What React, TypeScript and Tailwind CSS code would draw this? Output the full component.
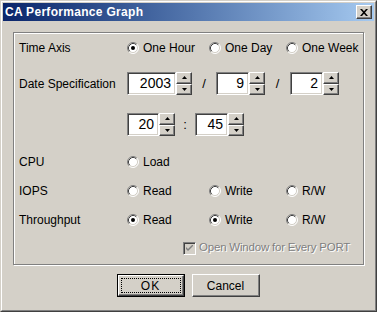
import React from "react";

const font = { fontFamily: '"Liberation Sans", Arial, sans-serif' };

function Radio({ checked, label }: { checked?: boolean; label: string }) {
  return (
    <div className="flex items-center h-[20px]">
      <svg width="12" height="12" viewBox="0 0 12 12" className="shrink-0">
        <circle cx="6" cy="6" r="5" fill="#fff" />
        <path d="M2.11 9.89 A5.5 5.5 0 0 1 9.89 2.11" fill="none" stroke="#808080" strokeWidth="1" />
        <path d="M9.89 2.11 A5.5 5.5 0 0 1 2.11 9.89" fill="none" stroke="#fff" strokeWidth="1" />
        <path d="M2.82 9.18 A4.5 4.5 0 0 1 9.18 2.82" fill="none" stroke="#404040" strokeWidth="1" />
        <path d="M9.18 2.82 A4.5 4.5 0 0 1 2.82 9.18" fill="none" stroke="#d4d0c8" strokeWidth="1" />
        {checked && <circle cx="6" cy="6" r="2" fill="#000" />}
      </svg>
      <span className="ml-[4px]">{label}</span>
    </div>
  );
}

function Arrow({ up }: { up?: boolean }) {
  return (
    <svg width="5" height="3" viewBox="0 0 5 3">
      <path d={up ? "M2.5 0 L5 3 L0 3 Z" : "M0 0 L5 0 L2.5 3 Z"} fill="#000" />
    </svg>
  );
}

function SpinBtn({ up }: { up?: boolean }) {
  return (
    <div className="h-[11.5px] flex items-center justify-center border border-t-white border-l-white border-r-[#404040] border-b-[#404040] shadow-[inset_-1px_-1px_0_#808080] bg-[#d4d0c8]">
      <Arrow up={up} />
    </div>
  );
}

function Spin({ value, w }: { value: string; w: string }) {
  return (
    <div className="flex h-[23px]">
      <div
        className={`${w} h-full bg-white border border-t-[#808080] border-l-[#808080] border-r-white border-b-white shadow-[inset_1px_1px_0_#404040,inset_-1px_-1px_0_#d4d0c8] flex items-center justify-end pr-[4px] text-[14px]`}
      >
        {value}
      </div>
      <div className="w-[16px] flex flex-col">
        <SpinBtn up />
        <SpinBtn />
      </div>
    </div>
  );
}

function Sep({ ch, w }: { ch: string; w: string }) {
  return <div className={`${w} text-center text-[13px]`}>{ch}</div>;
}

export default function App() {
  return (
    <div style={font} className="w-[377px] h-[312px] bg-[#d4d0c8] text-[12px] text-black border border-t-[#d4d0c8] border-l-[#d4d0c8] border-r-[#404040] border-b-[#404040]">
      <div className="h-full border border-t-white border-l-white border-r-[#808080] border-b-[#808080] p-px flex flex-col">
        <div className="h-[18px] flex items-center justify-between bg-gradient-to-r from-[#0a246a] to-[#a6caf0] pl-[2px] pr-[2px]">
          <span className="font-bold text-white text-[12px] tracking-[0.3px]">CA Performance Graph</span>
          <div className="w-[16px] h-[14px] bg-[#d4d0c8] border border-t-white border-l-white border-r-[#404040] border-b-[#404040] shadow-[inset_-1px_-1px_0_#808080] flex items-center justify-center">
            <svg width="8" height="7" viewBox="0 0 8 7">
              <path d="M0 0 L2 0 L4 2.3 L6 0 L8 0 L5 3.5 L8 7 L6 7 L4 4.7 L2 7 L0 7 L3 3.5 Z" fill="#000" />
            </svg>
          </div>
        </div>

        <div className="pl-[10px] pt-[11px]">
          <div className="w-[351px] h-[233px] border border-[#808080] shadow-[inset_1px_1px_0_#fff,1px_1px_0_#fff] pl-[5px] pt-[5px] flex flex-col">
            <div className="flex items-center h-[20px]">
              <div className="w-[108px]">Time Axis</div>
              <div className="w-[82px]"><Radio checked label="One Hour" /></div>
              <div className="w-[77px]"><Radio label="One Day" /></div>
              <Radio label="One Week" />
            </div>

            <div className="flex items-center h-[23px] mt-[14px]">
              <div className="w-[108px]">Date Specification</div>
              <Spin value="2003" w="w-[49px]" />
              <Sep ch="/" w="w-[24px]" />
              <Spin value="9" w="w-[33px]" />
              <Sep ch="/" w="w-[25px]" />
              <Spin value="2" w="w-[33px]" />
            </div>

            <div className="flex items-center h-[23px] mt-[18px]">
              <div className="w-[108px]"></div>
              <Spin value="20" w="w-[32px]" />
              <Sep ch=":" w="w-[20px]" />
              <Spin value="45" w="w-[33px]" />
            </div>

            <div className="flex items-center h-[20px] mt-[16px]">
              <div className="w-[108px]">CPU</div>
              <Radio label="Load" />
            </div>

            <div className="flex items-center h-[20px] mt-[9px]">
              <div className="w-[108px]">IOPS</div>
              <div className="w-[82px]"><Radio label="Read" /></div>
              <div className="w-[77px]"><Radio label="Write" /></div>
              <Radio label="R/W" />
            </div>

            <div className="flex items-center h-[20px] mt-[9px]">
              <div className="w-[108px]">Throughput</div>
              <div className="w-[82px]"><Radio checked label="Read" /></div>
              <div className="w-[77px]"><Radio checked label="Write" /></div>
              <Radio label="R/W" />
            </div>

            <div className="flex items-center h-[18px] mt-[9px] ml-[164px]">
              <div className="w-[13px] h-[13px] bg-[#d4d0c8] border border-t-[#808080] border-l-[#808080] border-r-white border-b-white shadow-[inset_1px_1px_0_#404040,inset_-1px_-1px_0_#d4d0c8] flex items-center justify-center">
                <svg width="7" height="7" viewBox="0 0 7 7">
                  <path d="M0 2 L0 4 L2 6 L7 1 L7 -1 L2 4 Z" fill="#808080" />
                </svg>
              </div>
              <span className="ml-[3px] text-[11.5px] tracking-[-0.2px] text-[#808080] [text-shadow:1px_1px_0_#fff]">Open Window for Every PORT</span>
            </div>
          </div>
        </div>

        <div className="flex justify-center gap-[7px] mt-[9px] pr-[1px]">
          <div className="w-[68px] h-[23px] border border-black p-0">
            <div className="w-full h-full border border-t-white border-l-white border-r-[#404040] border-b-[#404040] shadow-[inset_-1px_-1px_0_#808080] p-[2px]">
              <div className="w-full h-full border border-dotted border-black flex items-center justify-center tracking-[1px]">OK</div>
            </div>
          </div>
          <div className="w-[68px] h-[23px] border border-t-white border-l-white border-r-[#404040] border-b-[#404040] shadow-[inset_-1px_-1px_0_#808080] flex items-center justify-center">
            Cancel
          </div>
        </div>
      </div>
    </div>
  );
}
